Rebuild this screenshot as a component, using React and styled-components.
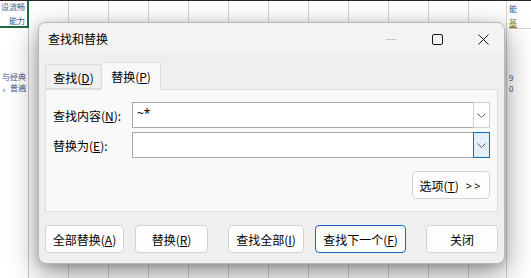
import React from "react";
import styled, { createGlobalStyle } from "styled-components";

const GlobalStyle = createGlobalStyle`
  html, body {
    margin: 0;
    padding: 0;
  }
  body {
    width: 531px;
    height: 278px;
    overflow: hidden;
    background: #ffffff;
    font-family: "Noto Sans", "Noto Sans CJK SC", sans-serif;
    color: #000000;
  }
`;

function Chevron() {
  return (
    <svg width="9" height="5" viewBox="0 0 9 5">
      <polyline
        points="0.5,0.5 4.5,4.5 8.5,0.5"
        fill="none"
        stroke="#5c5c5c"
        strokeWidth="1"
      />
    </svg>
  );
}

function App() {
  return (
    <>
      <GlobalStyle />
      <Sheet>
        <LeftCol>
          <SelectedCell>
            <CellText>设流畅</CellText>
            <CellText>能力</CellText>
          </SelectedCell>
          <CellBlock>
            <CellText>与经典</CellText>
            <CellText>，普遍</CellText>
          </CellBlock>
        </LeftCol>
        <RightCol>
          <RightTop>
            <CellText $left>能</CellText>
            <CellText $left $green>基</CellText>
          </RightTop>
          <CellBlock>
            <CellText $left>9</CellText>
            <CellText $left>0</CellText>
          </CellBlock>
        </RightCol>

        <Dialog>
          <TitleBar>
            <Title>查找和替换</Title>
            <WinButtons>
              <WinButton>
                <svg width="10" height="10" viewBox="0 0 10 10">
                  <line x1="0" y1="5.5" x2="10" y2="5.5" stroke="#c4c4c4" strokeWidth="1" />
                </svg>
              </WinButton>
              <WinButton>
                <svg width="11" height="11" viewBox="0 0 11 11">
                  <rect x="0.5" y="0.5" width="10" height="10" rx="1.5" fill="none" stroke="#1a1a1a" strokeWidth="1" />
                </svg>
              </WinButton>
              <WinButton>
                <svg width="11" height="11" viewBox="0 0 11 11">
                  <path d="M0.5 0.5 L10.5 10.5 M10.5 0.5 L0.5 10.5" stroke="#1a1a1a" strokeWidth="1" />
                </svg>
              </WinButton>
            </WinButtons>
          </TitleBar>

          <Body>
            <Tabs>
              <Tab>
                查找(<u>D</u>)
              </Tab>
              <Tab $active>
                替换(<u>P</u>)
              </Tab>
            </Tabs>
            <Panel>
              <FieldRow>
                <Label>
                  查找内容(<u>N</u>):
                </Label>
                <Combo>
                  <ComboText>~*</ComboText>
                  <DropButton>
                    <Chevron />
                  </DropButton>
                </Combo>
              </FieldRow>
              <FieldRow>
                <Label>
                  替换为(<u>E</u>):
                </Label>
                <Combo>
                  <ComboText />
                  <DropButton $active>
                    <Chevron />
                  </DropButton>
                </Combo>
              </FieldRow>
              <OptionsRow>
                <Button $w={78}>
                  选项(<u>T</u>)<Arrows>&gt;&gt;</Arrows>
                </Button>
              </OptionsRow>
            </Panel>
            <ButtonRow>
              <Button $w={79}>
                全部替换(<u>A</u>)
              </Button>
              <Button $w={73} $ml={11}>
                替换(<u>R</u>)
              </Button>
              <Button $w={76} $ml={20}>
                查找全部(<u>I</u>)
              </Button>
              <Button $w={91} $ml={11} $focus>
                查找下一个(<u>F</u>)
              </Button>
              <Button $w={72} $ml={20}>
                关闭
              </Button>
            </ButtonRow>
          </Body>
        </Dialog>
      </Sheet>
    </>
  );
}

export default App;

// 背景表格

const Sheet = styled.div`
  position: relative;
  width: 531px;
  height: 278px;
  box-sizing: border-box;
  border-top: 1px solid #262626;
  overflow: hidden;
  display: flex;
  justify-content: space-between;
  background-color: #ffffff;
  background-image: linear-gradient(to right, #d4d4d4 1px, transparent 1px);
  background-size: 40px 100%;
  background-position: 28px 0;
`;

const LeftCol = styled.div`
  width: 28px;
  display: flex;
  flex-direction: column;
  background: #ffffff;
  border-right: 1px solid #c8c8c8;
`;

const SelectedCell = styled.div`
  height: 27px;
  box-sizing: border-box;
  border-right: 2px solid #1e6b41;
  border-bottom: 2px solid #1e6b41;
  margin-right: -1px;
  display: flex;
  flex-direction: column;
  justify-content: space-between;
  padding: 1px 0 0;
`;

const CellBlock = styled.div`
  margin-top: 44px;
  display: flex;
  flex-direction: column;
  gap: 1px;
`;

const CellText = styled.div`
  font-family: "Noto Sans CJK SC", sans-serif;
  font-size: 8px;
  line-height: 10px;
  color: ${(p) => (p.$green ? "#8a7a2a" : "#3f5b8c")};
  white-space: nowrap;
  display: flex;
  justify-content: ${(p) => (p.$left ? "flex-start" : "flex-end")};
  padding-right: ${(p) => (p.$left ? "0" : "2px")};
  text-decoration: ${(p) => (p.$green ? "underline" : "none")};
`;

const RightCol = styled.div`
  width: 22px;
  padding-left: 2px;
  display: flex;
  flex-direction: column;
  background: #ffffff;
  border-left: 1px solid #d4d4d4;
`;

const RightTop = styled.div`
  height: 28px;
  box-sizing: border-box;
  padding-top: 3px;
  display: flex;
  flex-direction: column;
  justify-content: space-between;
  border-bottom: 1px solid #d4d4d4;
`;

// 对话框

const Dialog = styled.div`
  position: absolute;
  left: 38px;
  top: 21px;
  width: 467px;
  height: 242px;
  box-sizing: border-box;
  border: 1px solid #b8b8b8;
  border-radius: 8px;
  background: #efefef;
  box-shadow: 0 10px 30px rgba(0, 0, 0, 0.42), 0 2px 8px rgba(0, 0, 0, 0.16);
  display: flex;
  flex-direction: column;
  overflow: hidden;
`;

const TitleBar = styled.div`
  height: 30px;
  flex-shrink: 0;
  display: flex;
  align-items: center;
  justify-content: space-between;
  background: #f3f3f3;
  padding-left: 9px;
`;

const Title = styled.div`
  font-family: "Noto Sans CJK SC", sans-serif;
  font-size: 12px;
  line-height: 16px;
  padding-top: 1px;
`;

const WinButtons = styled.div`
  display: flex;
  height: 100%;
  margin-right: -2px;
`;

const WinButton = styled.div`
  width: 46px;
  height: 100%;
  display: flex;
  align-items: center;
  justify-content: center;
  padding-top: 2px;
  box-sizing: border-box;
`;

const Body = styled.div`
  flex: 1;
  display: flex;
  flex-direction: column;
  padding: 9px 6px 10px;
`;

const Tabs = styled.div`
  display: flex;
  align-items: flex-end;
  height: 27px;
  position: relative;
  z-index: 1;
`;

const Tab = styled.div`
  width: ${(p) => (p.$active ? "59px" : "57px")};
  height: ${(p) => (p.$active ? "28px" : "25px")};
  margin-bottom: ${(p) => (p.$active ? "-1px" : "0")};
  box-sizing: border-box;
  border: 1px solid #dcdcdc;
  border-bottom: ${(p) => (p.$active ? "none" : "1px solid #dcdcdc")};
  border-left: ${(p) => (p.$active ? "none" : "1px solid #dcdcdc")};
  background: ${(p) => (p.$active ? "#f9f9f9" : "#f0f0f0")};
  font-family: "Noto Sans CJK SC", sans-serif;
  font-size: 12px;
  display: flex;
  align-items: center;
  justify-content: center;
  padding-top: ${(p) => (p.$active ? "0" : "2px")};
`;

const Panel = styled.div`
  height: 123px;
  box-sizing: border-box;
  border: 1px solid #dedede;
  background: #f9f9f9;
  padding: 12px 7px 0 7px;
  display: flex;
  flex-direction: column;
  gap: 4px;
`;

const FieldRow = styled.div`
  display: grid;
  grid-template-columns: 79px 1fr;
  align-items: center;
  height: 26px;
`;

const Label = styled.div`
  font-family: "Noto Sans CJK SC", sans-serif;
  font-size: 12px;
  white-space: nowrap;
`;

const Combo = styled.div`
  height: 26px;
  box-sizing: border-box;
  border: 1px solid #a9a9a9;
  background: #ffffff;
  display: flex;
`;

const ComboText = styled.div`
  flex: 1;
  font-family: "Noto Sans", sans-serif;
  font-size: 12px;
  line-height: 22px;
  padding-left: 4px;
`;

const DropButton = styled.div`
  width: 17px;
  margin: -1px -1px -1px 0;
  box-sizing: border-box;
  border: 1px solid ${(p) => (p.$active ? "#0a6fc2" : "#cfcfcf")};
  background: ${(p) => (p.$active ? "#e3effa" : "#ffffff")};
  display: flex;
  align-items: center;
  justify-content: center;
`;

const OptionsRow = styled.div`
  display: flex;
  justify-content: flex-end;
  margin-top: 9px;
`;

const Arrows = styled.span`
  font-family: "Noto Sans", sans-serif;
  font-size: 11px;
  letter-spacing: 2px;
  margin-left: 7px;
`;

const ButtonRow = styled.div`
  display: flex;
  margin-top: 13px;
`;

const Button = styled.div`
  width: ${(p) => p.$w}px;
  height: 28px;
  margin-left: ${(p) => p.$ml || 0}px;
  box-sizing: border-box;
  border: 1px solid ${(p) => (p.$focus ? "#1668c0" : "#d3d3d3")};
  border-radius: 4px;
  background: #fdfdfd;
  font-family: "Noto Sans CJK SC", sans-serif;
  font-size: 12px;
  display: flex;
  align-items: center;
  justify-content: center;
  white-space: nowrap;
`;
